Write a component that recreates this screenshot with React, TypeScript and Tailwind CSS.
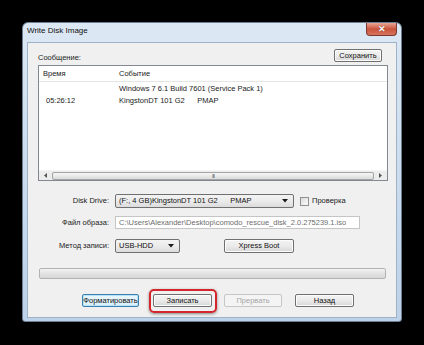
import type { ReactNode } from 'react';

const font = { fontFamily: '"Liberation Sans", Arial, sans-serif' };

function Btn({ children, w, focus, disabled }: { children: ReactNode; w: string; focus?: boolean; disabled?: boolean }) {
  const base = 'h-[13px] flex items-center justify-center rounded-[2px] text-[7.5px] leading-none';
  if (disabled) {
    return <div className={`${base} ${w} border border-[#c3c7ca] bg-[#f4f4f4] text-[#a6a6a6]`}>{children}</div>;
  }
  if (focus) {
    return (
      <div className={`${base} ${w} border border-[#3c7fb1] bg-gradient-to-b from-[#eaf6fd] to-[#d9f0fc] text-[#111] shadow-[inset_0_0_0_1px_#b7e3f8]`}>
        {children}
      </div>
    );
  }
  return (
    <div className={`${base} ${w} border border-[#707070] bg-gradient-to-b from-[#f3f3f3] via-[#ebebeb] to-[#d6d6d6] text-[#111] shadow-[inset_0_0_0_1px_#fcfcfc]`}>
      {children}
    </div>
  );
}

function Combo({ children, w }: { children: ReactNode; w: string }) {
  return (
    <div className={`${w} h-[14px] flex items-center justify-between pl-[3px] pr-[5px] rounded-[2px] border border-[#707070] bg-gradient-to-b from-[#f3f3f3] via-[#ebebeb] to-[#dcdcdc] text-[7.5px] leading-none text-[#111] whitespace-pre`}>
      <span>{children}</span>
      <svg width="6" height="4" viewBox="0 0 6 4">
        <path d="M0 0h6L3 3.5z" fill="#1a1a1a" />
      </svg>
    </div>
  );
}

export default function App() {
  return (
    <div className="w-[424px] h-[345px] bg-black pt-[22px] pl-[22px]" style={font}>
      <div className="w-[380px] h-[300px] rounded-t-[6px] rounded-b-[3px] bg-gradient-to-b from-[#dce8f4] via-[#cbdcee] to-[#bdd2e8] border border-[#6d7f93] px-[4px] pb-[3px] flex flex-col">
        {/* title bar */}
        <div className="h-[19px] flex items-start justify-between">
          <span className="pt-[4px] text-[8px] leading-none text-[#111]">Write Disk Image</span>
          <div className="w-[31px] h-[13px] rounded-b-[4px] border border-t-0 border-[#7a3a32] bg-gradient-to-b from-[#e9a796] via-[#c9533c] to-[#d8735c] flex items-center justify-center">
            <span className="text-[9px] leading-none font-bold text-white [text-shadow:0_0_1px_#5a1d14]">✕</span>
          </div>
        </div>

        {/* client area */}
        <div className="flex-1 bg-[#f0f0f0] border border-[#9fb3c8] pl-[10px] pr-[8px] pt-[6px] text-[7.5px] leading-none text-[#1a1a1a]">
          <div className="h-[13px] flex items-end justify-between">
            <span className="pb-[1px]">Сообщение:</span>
            <div className="mr-[6px]">
              <Btn w="w-[48px]">Сохранить</Btn>
            </div>
          </div>

          {/* list view */}
          <div className="mt-[3px] h-[116px] border border-[#828790] bg-white flex flex-col">
            <div className="h-[16px] flex items-center border-b border-[#e5e5e5]">
              <span className="w-[80px] pl-[4px]">Время</span>
              <span>Событие</span>
            </div>
            <div className="flex-1 pt-[1px]">
              <div className="h-[12px] flex items-center">
                <span className="w-[80px]" />
                <span>Windows 7 6.1 Build 7601 (Service Pack 1)</span>
              </div>
              <div className="h-[12px] flex items-center">
                <span className="w-[80px] pl-[7px]">05:26:12</span>
                <span className="whitespace-pre">KingstonDT 101 G2      PMAP</span>
              </div>
            </div>
            <div className="h-[10px] bg-[#ececec] border-t border-[#f5f5f5] flex items-center">
              <div className="w-[13px] flex justify-center">
                <svg width="3" height="5" viewBox="0 0 3 5"><path d="M3 0v5L0 2.5z" fill="#555" /></svg>
              </div>
              <div className="flex-1 h-[8px] rounded-[2px] border border-[#a4a4a4] bg-gradient-to-b from-[#f6f6f6] to-[#dcdcdc] flex items-center justify-center">
                <span className="text-[6px] leading-none text-[#666] tracking-[-1px]">III</span>
              </div>
              <div className="w-[13px] flex justify-center">
                <svg width="3" height="5" viewBox="0 0 3 5"><path d="M0 0v5L3 2.5z" fill="#555" /></svg>
              </div>
            </div>
          </div>

          {/* Disk Drive */}
          <div className="mt-[13px] h-[14px] flex items-center">
            <span className="w-[71px] text-right">Disk Drive:</span>
            <div className="ml-[6px]">
              <Combo w="w-[179px]">{'(F:, 4 GB)KingstonDT 101 G2      PMAP'}</Combo>
            </div>
            <div className="ml-[6px] w-[9px] h-[9px] border border-[#8f8f8f] bg-gradient-to-br from-[#dcdcdc] to-[#fbfbfb]" />
            <span className="ml-[3px]">Проверка</span>
          </div>

          {/* image file */}
          <div className="mt-[8px] h-[13px] flex items-center">
            <span className="w-[71px] text-right">Файл образа:</span>
            <div className="ml-[6px] w-[245px] h-[13px] border border-[#c5c5c5] bg-white pl-[3px] flex items-center text-[#6d6d6d]">
              C:\Users\Alexander\Desktop\comodo_rescue_disk_2.0.275239.1.iso
            </div>
          </div>

          {/* method */}
          <div className="mt-[9px] h-[15px] flex items-center">
            <span className="w-[71px] text-right">Метод записи:</span>
            <div className="ml-[6px]">
              <Combo w="w-[65px]">USB-HDD</Combo>
            </div>
            <div className="ml-[44px] mt-[1px]">
              <Btn w="w-[70px] !h-[14px]">Xpress Boot</Btn>
            </div>
          </div>

          {/* progress */}
          <div className="mt-[15px] ml-[1px] w-[347px] h-[11px] rounded-[2px] border border-[#b2b2b2] bg-gradient-to-b from-[#f3f3f3] via-[#e2e2e2] to-[#d8d8d8]" />

          {/* buttons */}
          <div className="mt-[15px] ml-[44px] flex items-center">
            <Btn w="w-[57px]" focus>Форматировать</Btn>
            <div className="relative ml-[14px]">
              <Btn w="w-[59px]">Записать</Btn>
              <span className="absolute -left-[4px] -right-[5px] -top-[5px] -bottom-[6px] rounded-[5px] border-2 border-[#d3252c] shadow-[0_1px_3px_rgba(0,0,0,0.45)]" />
            </div>
            <div className="ml-[12px]">
              <Btn w="w-[58px]" disabled>Прервать</Btn>
            </div>
            <div className="ml-[13px]">
              <Btn w="w-[59px]">Назад</Btn>
            </div>
          </div>
        </div>
      </div>
    </div>
  );
}
